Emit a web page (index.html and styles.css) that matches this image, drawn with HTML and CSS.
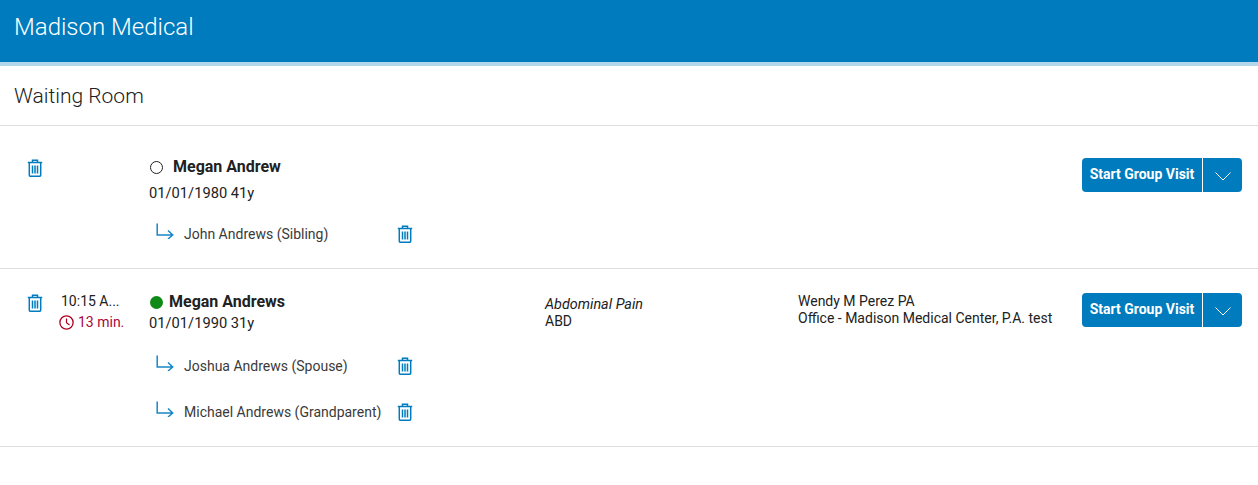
FILE: index.html
```html
<!DOCTYPE html>
<html lang="en">
<head>
    <meta charset="UTF-8">
    <meta name="viewport" content="width=device-width, initial-scale=1.0">
    <title>Madison Medical - Waiting Room</title>
    <link rel="stylesheet" href="styles.css">
</head>
<body>
    <svg class="icon-defs" width="0" height="0" aria-hidden="true">
        <symbol id="trash" viewBox="0 0 16 18">
            <path d="M0.8 3.5h14.4M5.5 3.5V1.2h5v2.3M2.3 3.5v12.4c0 .8.6 1.4 1.4 1.4h8.6c.8 0 1.4-.6 1.4-1.4V3.5" fill="none" stroke="currentColor" stroke-width="1.5"/>
            <path d="M5.5 6.5v8M8 6.5v8M10.5 6.5v8" fill="none" stroke="currentColor" stroke-width="1.5"/>
        </symbol>
        <symbol id="arrow" viewBox="0 0 18 16">
            <path d="M1.2 0.5v11.5h15.5M12 7.5l4.7 4.5-4.7 4" fill="none" stroke="currentColor" stroke-width="1.5"/>
        </symbol>
    </svg>

    <header class="app-header">Madison Medical</header>
    <h1 class="page-title">Waiting Room</h1>

    <div class="visit visit-first">
        <button class="icon-btn"><svg class="trash"><use href="#trash"/></svg></button>
        <div class="visit-time"></div>
        <div class="patient">
            <div class="patient-name name-gap"><span class="status status-empty"></span>Megan Andrew</div>
            <div class="patient-dob dob-first">01/01/1980 41y</div>
            <div class="relatives">
                <div class="relative">
                    <svg class="arrow"><use href="#arrow"/></svg>
                    <span class="relative-name">John Andrews (Sibling)</span>
                    <button class="icon-btn"><svg class="trash"><use href="#trash"/></svg></button>
                </div>
            </div>
        </div>
        <div class="reason"></div>
        <div class="provider"></div>
        <div class="btn-group">
            <button class="btn-main">Start Group Visit</button>
            <button class="btn-caret"><svg width="16" height="9" viewBox="0 0 16 9"><path d="M0.5 0.5l7.5 7.5 7.5-7.5" fill="none" stroke="#fff" stroke-width="1"/></svg></button>
        </div>
    </div>

    <div class="visit">
        <button class="icon-btn"><svg class="trash"><use href="#trash"/></svg></button>
        <div class="visit-time">
            <div class="time-text">10:15 A...</div>
            <div class="time-wait">
                <svg class="clock" width="15" height="15" viewBox="0 0 15 15"><circle cx="7.5" cy="7.5" r="6.6" fill="none" stroke="#b00020" stroke-width="1.3"/><path d="M7.5 3.5v4.2l3 2.3" fill="none" stroke="#b00020" stroke-width="1.2"/></svg>
                13 min.
            </div>
        </div>
        <div class="patient">
            <div class="patient-name"><span class="status status-active"></span>Megan Andrews</div>
            <div class="patient-dob">01/01/1990 31y</div>
            <div class="relatives">
                <div class="relative">
                    <svg class="arrow"><use href="#arrow"/></svg>
                    <span class="relative-name">Joshua Andrews (Spouse)</span>
                    <button class="icon-btn"><svg class="trash"><use href="#trash"/></svg></button>
                </div>
                <div class="relative">
                    <svg class="arrow"><use href="#arrow"/></svg>
                    <span class="relative-name">Michael Andrews (Grandparent)</span>
                    <button class="icon-btn"><svg class="trash"><use href="#trash"/></svg></button>
                </div>
            </div>
        </div>
        <div class="reason">
            <div class="reason-title">Abdominal Pain</div>
            <div>ABD</div>
        </div>
        <div class="provider">
            <div>Wendy M Perez PA</div>
            <div>Office - Madison Medical Center, P.A. test</div>
        </div>
        <div class="btn-group">
            <button class="btn-main">Start Group Visit</button>
            <button class="btn-caret"><svg width="16" height="9" viewBox="0 0 16 9"><path d="M0.5 0.5l7.5 7.5 7.5-7.5" fill="none" stroke="#fff" stroke-width="1"/></svg></button>
        </div>
    </div>
</body>
</html>
```

FILE: styles.css
```css
body {
    font-family: Roboto, "Liberation Sans", sans-serif;
    font-size: 14px;
    color: #212121;
    margin: 0;
    background-color: #fff;
}
.icon-defs {
    display: block;
    height: 0;
}
.app-header {
    background-color: #007bbd;
    border-bottom: 4px solid #b2d7eb;
    color: #fff;
    font-size: 24px;
    font-weight: 300;
    line-height: 28px;
    padding: 13px 14px 0;
    height: 49px;
}
.page-title {
    margin: 0;
    height: 59px;
    padding-left: 14px;
    font-size: 21px;
    font-weight: 300;
    line-height: 60px;
    border-bottom: 1px solid #dedede;
}
.visit {
    display: grid;
    grid-template-columns: 44px 91px 396px 253px 284px 160px;
    padding: 23px 16px 22px 14px;
    border-bottom: 1px solid #dedede;
}
.visit-first {
    padding-top: 31px;
    padding-bottom: 22px;
}
.icon-btn {
    border: none;
    background: none;
    padding: 0;
    color: #007bbd;
    width: 18px;
    height: 20px;
    display: block;
    cursor: pointer;
    margin-left: 12px;
}
.trash {
    width: 16px;
    height: 18px;
    display: block;
    margin: 1px auto 0;
}
.visit-time {
    padding: 0 28px 0 3px;
    line-height: 19px;
}
.time-wait {
    color: #a8063c;
    display: flex;
    align-items: center;
    gap: 4px;
    white-space: nowrap;
    margin: 2px 0 0 -2px;
}
.clock {
    flex: none;
}
.patient {
    min-width: 0;
}
.patient-name {
    display: flex;
    align-items: center;
    font-size: 16px;
    font-weight: 700;
    line-height: 20px;
}
.status {
    width: 13px;
    height: 13px;
    border-radius: 50%;
    margin: 0 6px 0 1px;
    box-sizing: border-box;
    flex: none;
}
.name-gap .status {
    margin-right: 10px;
}
.status-empty {
    border: 1.5px solid #212121;
}
.status-active {
    background-color: #0f8a16;
}
.patient-dob {
    font-size: 14.7px;
    line-height: 20px;
    margin-top: 1px;
}
.dob-first {
    margin-top: 6px;
}
.relatives {
    padding-top: 21px;
}
.visit-first .relatives {
    padding-top: 19px;
}
.relative {
    display: flex;
    align-items: center;
    height: 24px;
    margin-bottom: 22px;
    color: #3a3a3a;
}
.relative:last-child {
    margin-bottom: 0;
}
.relative .icon-btn {
    margin: -2px 0 0;
}
.relative-name {
    width: 212px;
    white-space: nowrap;
}
.arrow {
    width: 18px;
    height: 16px;
    color: #1a86c8;
    margin: -6px 10px 0 7px;
    flex: none;
}
.reason,
.provider {
    line-height: 17px;
}
.reason {
    padding-top: 4px;
}
.provider {
    padding-top: 1px;
}
.reason-title {
    font-style: italic;
    font-size: 14.4px;
}
.btn-group {
    display: flex;
    height: 34px;
    margin-top: 1px;
}
.btn-main,
.btn-caret {
    background-color: #007bbd;
    color: #fff;
    border: none;
    font-family: inherit;
    cursor: pointer;
}
.btn-main {
    width: 120px;
    font-size: 14px;
    font-weight: 700;
    border-radius: 4px 0 0 4px;
    padding: 0 0 2px;
}
.btn-caret {
    width: 39px;
    margin-left: 1px;
    border-radius: 0 4px 4px 0;
    padding: 2px 0 0;
}
```
